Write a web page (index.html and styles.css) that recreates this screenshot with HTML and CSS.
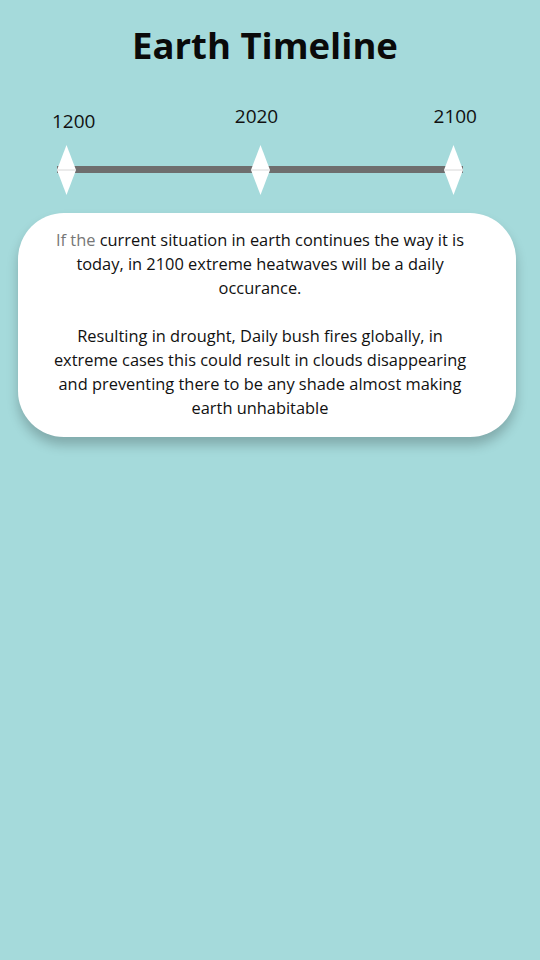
FILE: index.html
```html
<!DOCTYPE html>
<html lang="en">
<head>
<meta charset="utf-8">
<title>Earth Timeline</title>
<link rel="stylesheet" href="styles.css">
</head>
<body>
<h1 class="title">Earth Timeline</h1>
<div class="years">
  <span class="year year-first">1200</span>
  <span class="year year-mid">2020</span>
  <span class="year">2100</span>
</div>
<div class="timeline">
  <svg class="marker" viewBox="0 0 19 50" width="19" height="50"><polygon points="9.5,0 19,25 9.5,50 0,25" fill="#fff"/><line x1="0" y1="25" x2="19" y2="25" stroke="#d8d8d8" stroke-width="1"/></svg>
  <svg class="marker" viewBox="0 0 19 50" width="19" height="50"><polygon points="9.5,0 19,25 9.5,50 0,25" fill="#fff"/><line x1="0" y1="25" x2="19" y2="25" stroke="#d8d8d8" stroke-width="1"/></svg>
  <svg class="marker" viewBox="0 0 19 50" width="19" height="50"><polygon points="9.5,0 19,25 9.5,50 0,25" fill="#fff"/><line x1="0" y1="25" x2="19" y2="25" stroke="#d8d8d8" stroke-width="1"/></svg>
</div>
<div class="card">
  <p><span class="muted">If the</span> current situation in earth continues the way it is today, in 2100 extreme heatwaves will be a daily occurance.</p>
  <p>Resulting in drought, Daily bush fires globally, in extreme cases this could result in clouds disappearing and preventing there to be any shade almost making earth unhabitable</p>
</div>
</body>
</html>
```
FILE: styles.css
```css
html, body {
  margin: 0;
  padding: 0;
}
body {
  background: #a5dadb;
  font-family: "Open Sans", "Noto Sans", sans-serif;
  color: #111;
  width: 540px;
  min-height: 960px;
}
.title {
  margin: 0;
  padding: 19px 10px 0 0;
  text-align: center;
  font-size: 36.5px;
  line-height: 52px;
  font-weight: 700;
  color: #0a0a0a;
}
.years {
  display: flex;
  justify-content: space-between;
  align-items: flex-start;
  margin: 33px 63px 0 52px;
  font-size: 19px;
  line-height: 24px;
  color: #111;
}
.year-first {
  padding-top: 5px;
}
.year-mid {
  margin-right: 16px;
}
.timeline {
  position: relative;
  display: flex;
  justify-content: space-between;
  align-items: center;
  margin: 12px 77px 0 57px;
  height: 50px;
}
.timeline::before {
  content: "";
  position: absolute;
  left: 0;
  right: 0;
  top: 21px;
  height: 7px;
  background: #6e6e6e;
}
.marker {
  position: relative;
  display: block;
}
.card {
  margin: 18px 24px 0 18px;
  background: #fff;
  border-radius: 46px;
  padding: 15px 47px 17px 33px;
  text-align: center;
  font-size: 16.4px;
  line-height: 24px;
  color: #111;
  box-shadow: 0 8px 12px rgba(0, 0, 0, 0.22);
}
.card p {
  margin: 0;
}
.card p + p {
  margin-top: 24px;
}
.muted {
  color: #777;
}
```
